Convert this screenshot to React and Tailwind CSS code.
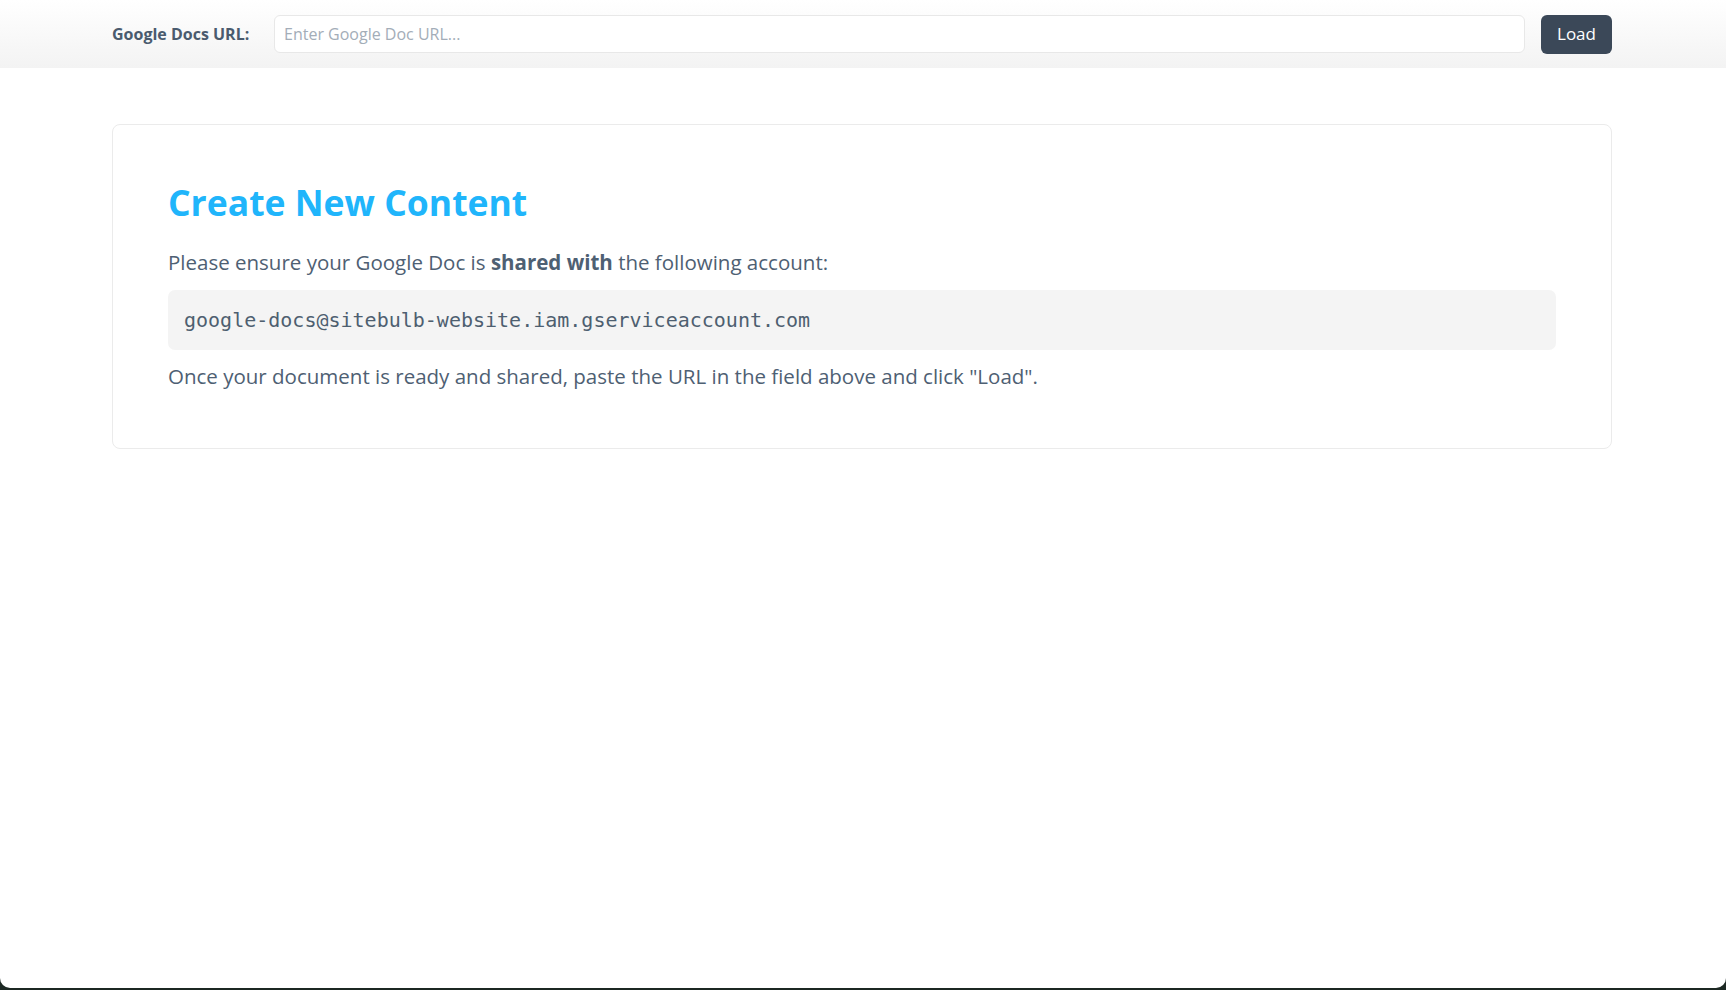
export default function App() {
  return (
    <div className="h-[990px] bg-[#1c2823]" style={{ fontFamily: "'Open Sans', 'Noto Sans', sans-serif" }}>
      <div className="h-[988px] bg-white rounded-b-[10px] overflow-hidden">
        <header className="h-[68px] bg-gradient-to-b from-white to-[#f3f3f3] flex items-center pl-[112px] pr-[114px]">
          <label className="w-[162px] text-[16px] font-bold text-[#4a5b6e]">Google Docs URL:</label>
          <input
            type="text"
            placeholder="Enter Google Doc URL..."
            className="flex-1 h-[38px] px-[9px] bg-white border border-[#e8e8e8] rounded-[6px] text-[16px] text-[#4a5b6e] placeholder:text-[#a3adb8] outline-none"
          />
          <button className="ml-[16px] h-[39px] w-[71px] bg-[#3b4858] text-white text-[17px] rounded-[6px]">
            Load
          </button>
        </header>

        <main className="pl-[112px] pr-[114px] pt-[56px]">
          <div className="border border-[#ebebeb] rounded-[8px] px-[55px] pt-[55px] pb-[57px]">
            <h1 className="text-[35.5px] leading-[44px] font-bold text-[#20b5fb]">Create New Content</h1>
            <p className="mt-[23px] text-[20.5px] leading-[30px] text-[#4e6073]">
              Please ensure your Google Doc is <strong className="font-bold">shared with</strong> the following account:
            </p>
            <div className="mt-[13px] h-[60px] bg-[#f4f4f4] rounded-[7px] flex items-center px-[16px]">
              <code
                className="text-[20px] text-[#4e5f70]"
                style={{ fontFamily: "'DejaVu Sans Mono', monospace" }}
              >
                google-docs@sitebulb-website.iam.gserviceaccount.com
              </code>
            </div>
            <p className="mt-[11px] text-[20.5px] leading-[30px] text-[#4e6073]">
              Once your document is ready and shared, paste the URL in the field above and click "Load".
            </p>
          </div>
        </main>
      </div>
    </div>
  );
}
